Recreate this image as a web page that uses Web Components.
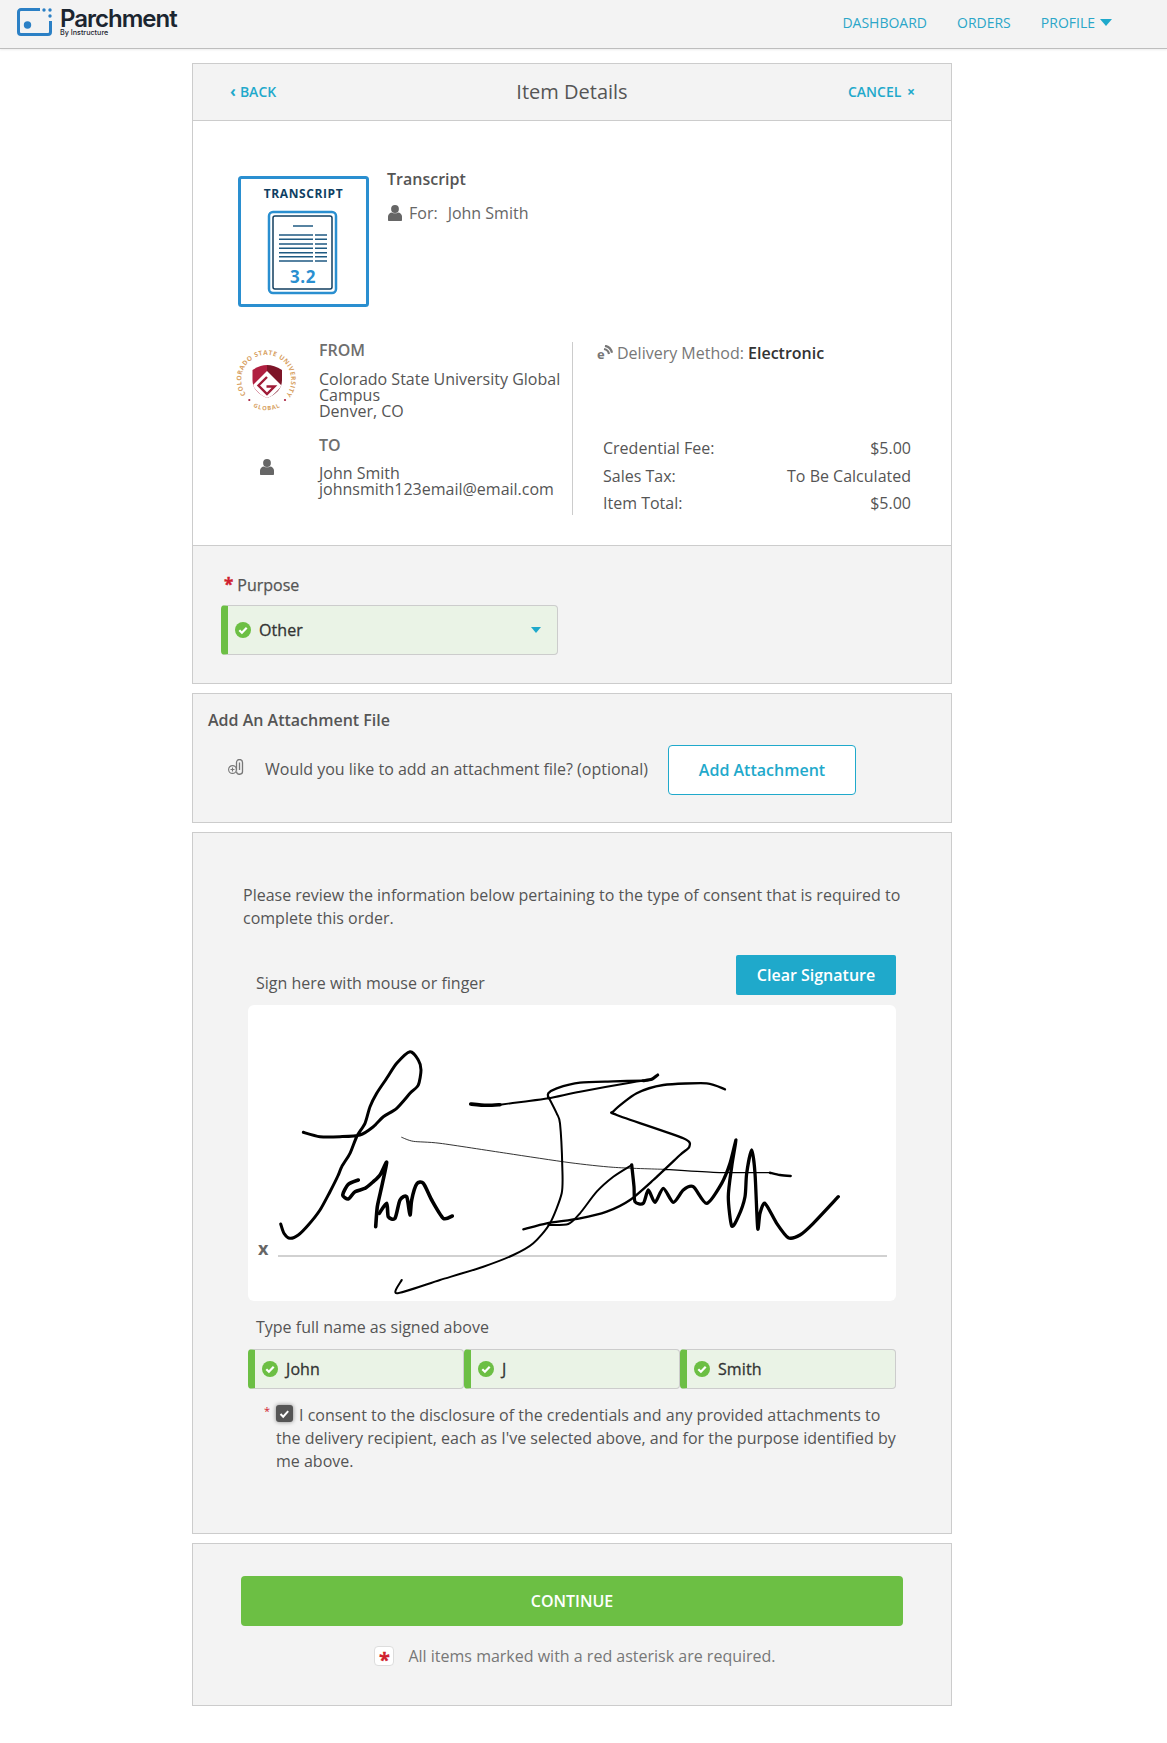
<!DOCTYPE html>
<html lang="en">
<head>
<meta charset="utf-8">
<title>Item Details</title>
<style>
  html, body { margin: 0; background: #fff; }
  body { font: 16px/22px "Open Sans", "Liberation Sans", sans-serif; color: #555; }
  .page { width: 760px; margin-left: 192px; padding: 14px 0 37px; }
</style>
</head>
<body>
<app-header></app-header>
<div class="page">
  <item-panel></item-panel>
  <attachment-panel></attachment-panel>
  <consent-panel></consent-panel>
  <continue-panel></continue-panel>
</div>

<script>
const PERSON = (w, h) => `<svg width="${w}" height="${h}" viewBox="0 0 14 16"><circle cx="7" cy="4" r="3.9" fill="#666"/><path d="M0 15v-3.6C0 9 2 7.6 4 7.4c1.8 1.2 4.2 1.2 6 0 2 .2 4 1.600 4 4V15c0 .6-.4 1-1 1H1c-.6 0-1-.4-1-1z" fill="#666"/></svg>`;
const CHECK = `<svg width="16" height="16" viewBox="0 0 16 16"><circle cx="8" cy="8" r="8" fill="#6cbf44"/><path d="M4.300 8.300l2.600 2.500 4.800-5" fill="none" stroke="#fff" stroke-width="2.200"/></svg>`;

class AppHeader extends HTMLElement {
  constructor() {
    super();
    this.attachShadow({ mode: 'open' });
    this.shadowRoot.innerHTML = `
      <style>
        :host { display: block; }
        .bar { height: 49px; box-sizing: border-box; background: #f3f3f3; border-bottom: 1px solid #bdbdbd; box-shadow: 0 1px 2px rgba(0,0,0,.08); display: flex; align-items: center; padding-left: 17px; }
        .brand { display: flex; align-items: flex-start; gap: 7px; margin-top: -4px; }
        .txt { padding-top: 1px; }
        .name { font: 600 24px/20px Inter, "Open Sans", sans-serif; color: #1b2530; letter-spacing: -1px; }
        .by { font: 500 7.200px/8px Inter, "Open Sans", sans-serif; color: #1b2530; }
        nav { margin-left: auto; margin-top: -3px; display: flex; gap: 30px; padding-right: 55px; font-size: 14px; line-height: 20px; color: #2ba6c8; align-items: center; }
        .tri { display: inline-block; width: 0; height: 0; border: 6.500px solid transparent; border-top: 7px solid #1fa9cb; border-bottom: 0; margin-left: 5px; vertical-align: 2px; }
      </style>
      <div class="bar">
        <div class="brand">
          <svg width="36" height="28" viewBox="0 0 36 28">
            <path d="M23 1.500H4A2.500 2.500 0 0 0 1.500 4v20A2.500 2.500 0 0 0 4 26.500h27a2.500 2.500 0 0 0 2.500-2.500V13" fill="none" stroke="#2b80c5" stroke-width="3"/>
            <circle cx="10.500" cy="17" r="3.700" fill="#2b80c5"/>
            <circle cx="27" cy="2" r="1.700" fill="#2b80c5"/><circle cx="33" cy="2" r="1.700" fill="#2b80c5"/><circle cx="33" cy="8" r="1.700" fill="#2b80c5"/>
          </svg>
          <div class="txt"><div class="name">Parchment</div><div class="by">By Instructure</div></div>
        </div>
        <nav><span>DASHBOARD</span><span>ORDERS</span><span>PROFILE<i class="tri"></i></span></nav>
      </div>`;
  }
}
customElements.define('app-header', AppHeader);

class TranscriptIcon extends HTMLElement {
  constructor() {
    super();
    this.attachShadow({ mode: 'open' });
    const rows = [59, 63.3, 68, 72.3, 76.7, 80.7, 85];
    const lines = rows.map(y => `<path d="M41 ${y}H75M77 ${y}H89"/>`).join('');
    this.shadowRoot.innerHTML = `
      <style>:host { display: block; width: 131px; height: 131px; flex: none; } text { font-family: "Open Sans", sans-serif; font-weight: 700; } svg { display: block; }</style>
      <svg width="131" height="131" viewBox="0 0 131 131">
        <rect x="1.500" y="1.500" width="128" height="128" rx="2" fill="#fff" stroke="#2a8fd0" stroke-width="3"/>
        <text x="65.500" y="21.500" text-anchor="middle" font-size="12" letter-spacing=".6" fill="#0f3f63">TRANSCRIPT</text>
        <rect x="31" y="36" width="67" height="81" rx="4" fill="none" stroke="#2a8fd0" stroke-width="2.500"/>
        <rect x="35" y="40" width="59" height="73" rx="2" fill="none" stroke="#123f60" stroke-width="1.500"/>
        <g stroke="#1f5a82" stroke-width="1.500" fill="none"><path d="M55 50H75"/>${lines}</g>
        <text x="65" y="107" text-anchor="middle" font-size="17" letter-spacing=".5" fill="#2a8fd0">3.2</text>
      </svg>`;
  }
}
customElements.define('transcript-icon', TranscriptIcon);

class SchoolLogo extends HTMLElement {
  constructor() {
    super();
    this.attachShadow({ mode: 'open' });
    this.shadowRoot.innerHTML = `
      <style>:host { display: block; width: 60px; height: 60px; } text { font-family: "Open Sans", sans-serif; font-weight: 700; fill: #d79f62; } svg { display: block; overflow: visible; }</style>
      <svg width="60" height="60" viewBox="0 0 60 60">
        <defs>
          <path id="top" d="M10 44.500A25 25 0 1 1 50.500 44.500"/>
          <path id="bot" d="M13 54A29 29 0 0 0 49 54"/>
          <clipPath id="sh"><path d="M16.500 20Q24 15 31 15Q38 15 46 20V30Q46 42 31 48Q16.500 42 16.500 30Z"/></clipPath>
        </defs>
        <text font-size="6.500"><textPath href="#top" textLength="110" lengthAdjust="spacing">COLORADO STATE UNIVERSITY</textPath></text>
        <text font-size="5.800" letter-spacing=".9"><textPath href="#bot" startOffset="50%" text-anchor="middle">GLOBAL</textPath></text>
        <circle cx="13.300" cy="50" r="1.100" fill="#a81f3d"/><circle cx="49" cy="50" r="1.100" fill="#a81f3d"/>
        <path d="M16.500 20Q24 15 31 15V48Q16.500 42 16.500 30Z" fill="#b01f40"/>
        <path d="M46 20Q38 15 31 15V48Q46 42 46 30Z" fill="#7d1528"/>
        <g clip-path="url(#sh)">
          <path d="M31 21L46 36L31 51L16 36Z" fill="#fff"/>
          <path d="M31 27L22.500 35.500L31 44L38.500 36.500H30.500" fill="none" stroke="#a01c38" stroke-width="2.400"/>
        </g>
      </svg>`;
  }
}
customElements.define('school-logo', SchoolLogo);

class ItemPanel extends HTMLElement {
  constructor() {
    super();
    this.attachShadow({ mode: 'open' });
    this.shadowRoot.innerHTML = `
      <style>
        :host { display: block; border: 1px solid #ccc; margin-bottom: 9px; background: #f3f3f3; }
        .head { height: 56px; border-bottom: 1px solid #ccc; display: grid; grid-template-columns: 1fr auto 1fr; align-items: center; box-sizing: content-box; }
        .link { font-size: 14px; font-weight: 600; color: #1fa9cb; }
        .back { padding-left: 37px; display: flex; align-items: center; gap: 4px; margin-top: -1px; }
        .back b { font-size: 16px; line-height: 16px; font-weight: 700; margin-top: -2px; }
        .cancel { justify-self: end; padding-right: 36px; }
        .cancel b { font-weight: 700; margin-left: 2px; }
        .title { font-size: 20px; color: #555; }
        .body { background: #fff; padding: 55px 0 30px; border-bottom: 1px solid #ccc; }
        .top { display: flex; gap: 19px; padding-left: 45px; }
        .tname { font-weight: 600; margin: -8px 0 0 -1px; }
        .for { display: flex; align-items: center; margin-top: 12px; gap: 7px; color: #666; }
        .for b { font-weight: 400; margin-left: 3px; }
        .cols { display: grid; grid-template-columns: 379px 1fr; margin-top: 35px; }
        .left { padding-bottom: 18px; }
        .row { display: flex; }
        .ic { width: 60px; margin-left: 43px; margin-right: 23px; display: flex; justify-content: center; flex: none; }
        .from-ic { padding-top: 8px; }
        .to-ic { padding: 22px 0 0 2px; box-sizing: border-box; }
        .to { margin-top: 18px; }
        h4 { margin: 0; font-size: 16px; line-height: 16px; font-weight: 600; color: #6e6e6e; }
        .addr { line-height: 16px; margin-top: 13px; }
        .to .addr { margin-top: 12px; }
        .right { border-left: 1px solid #ccc; padding-left: 24px; }
        .deliv { display: flex; align-items: center; gap: 4px; color: #777; }
        .deliv b { font-weight: 600; color: #333; }
        .dicon { position: relative; width: 16px; height: 16px; flex: none; }
        .dicon span { position: absolute; left: 0; top: 3px; font-weight: 700; font-size: 13px; line-height: 13px; }
        .fees { margin: 71px 0 -3px 6px; width: 308px; }
        .fee { display: flex; justify-content: space-between; height: 27.500px; line-height: 27.500px; }
        .purpose { padding: 28px 28px 28px; }
        .label { margin-left: 3px; -webkit-text-stroke: .25px #555; }
        .star { color: #d0202e; font-size: 17px; margin-right: 4px; font-weight: 700; -webkit-text-stroke: .4px #d0202e; }
        .sel { margin-top: 9px; width: 337px; height: 50px; box-sizing: border-box; background: #eaf3e6; border: 1px solid #ccc; border-left: 7px solid #6cbf44; border-radius: 4px; display: flex; align-items: center; gap: 8px; padding-left: 7px; color: #333; -webkit-text-stroke: .3px #333; letter-spacing: .1px; }
        .caret { margin-left: auto; margin-right: 16px; width: 0; height: 0; border: 5px solid transparent; border-top: 6px solid #1fa9cb; border-bottom: 0; }
        svg { flex: none; display: block; }
      </style>
      <div class="head">
        <span class="link back"><b>‹</b><span>BACK</span></span>
        <span class="title">Item Details</span>
        <span class="link cancel">CANCEL <b>×</b></span>
      </div>
      <div class="body">
        <div class="top">
          <transcript-icon></transcript-icon>
          <div>
            <div class="tname">Transcript</div>
            <div class="for">${PERSON(14, 16)}<span>For:</span><b>John Smith</b></div>
          </div>
        </div>
        <div class="cols">
          <div class="left">
            <div class="row">
              <div class="ic from-ic"><school-logo></school-logo></div>
              <div><h4>FROM</h4><div class="addr">Colorado State University Global<br>Campus<br>Denver, CO</div></div>
            </div>
            <div class="row to">
              <div class="ic to-ic">${PERSON(14, 16)}</div>
              <div><h4>TO</h4><div class="addr">John Smith<br>johnsmith123email@email.com</div></div>
            </div>
          </div>
          <div class="right">
            <div class="deliv">
              <div class="dicon"><span>e</span><svg width="16" height="16" viewBox="0 0 16 16"><path d="M7 4a6 6 0 0 1 5 5M8 .8a9 9 0 0 1 7 7" fill="none" stroke="#777" stroke-width="2.200"/></svg></div>
              <span>Delivery Method: <b>Electronic</b></span>
            </div>
            <div class="fees">
              <div class="fee"><span>Credential Fee:</span><span>$5.00</span></div>
              <div class="fee"><span>Sales Tax:</span><span>To Be Calculated</span></div>
              <div class="fee"><span>Item Total:</span><span>$5.00</span></div>
            </div>
          </div>
        </div>
      </div>
      <div class="purpose">
        <div class="label"><span class="star">*</span>Purpose</div>
        <div class="sel">${CHECK}<span>Other</span><i class="caret"></i></div>
      </div>`;
  }
}
customElements.define('item-panel', ItemPanel);

class AttachmentPanel extends HTMLElement {
  constructor() {
    super();
    this.attachShadow({ mode: 'open' });
    this.shadowRoot.innerHTML = `
      <style>
        :host { display: block; border: 1px solid #ccc; background: #f3f3f3; margin-bottom: 9px; padding: 15px 15px 27px; }
        .t { font-weight: 600; }
        .row { display: flex; align-items: center; margin-top: 14px; padding-left: 20px; }
        .row span { margin-top: -2px; }
        svg { flex: none; margin-right: 20px; margin-top: -6px; }
        .btn { margin-left: 20px; width: 188px; height: 50px; box-sizing: border-box; background: #fff; border: 1px solid #1fa9cb; border-radius: 4px; color: #1fa9cb; font-weight: 600; display: flex; align-items: center; justify-content: center; }
      </style>
      <div class="t">Add An Attachment File</div>
      <div class="row">
        <svg width="17" height="16" viewBox="0 0 17 16" fill="none" stroke="#777" stroke-width="1.100"><circle cx="4.500" cy="10.500" r="3.900"/><path d="M4.500 8.500v4M2.500 10.500h4" /><path d="M8.500 11.500V3.500a3 3 0 0 1 6 0V12a3 3 0 0 1-6 .5M11.500 3.500V11" stroke-width="1.300"/></svg>
        <span>Would you like to add an attachment file? (optional)</span>
        <div class="btn">Add Attachment</div>
      </div>`;
  }
}
customElements.define('attachment-panel', AttachmentPanel);

class SignaturePad extends HTMLElement {
  constructor() {
    super();
    this.attachShadow({ mode: 'open' });
    // points read off the reference, a and b are the two crops they were measured in
    const a = p => { const o = []; for (let i = 0; i < p.length; i += 2) o.push([p[i] / 3 + 240, p[i + 1] / 3 + 1000]); return o; };
    const b = p => { const o = []; for (let i = 0; i < p.length; i += 2) o.push([p[i] / 3 + 480, p[i + 1] / 3 + 1040]); return o; };
    const strokes = [
      [3, a([122,672,132,700,150,715,175,705,205,675,240,630,270,575,295,525,305,500,330,460,350,410,375,370,390,320,410,280,440,235,470,190,510,155,535,180,543,210,535,255,510,280,470,325,430,350,400,380,360,405,300,410,240,410,190,397])],
      [3.600, a([355,540,325,553,308,585,325,597,345,575,375,565,400,545,420,525,440,487,425,560,412,620,407,680])],
      [3.600, a([418,640,440,610,445,650,465,655,480,600,500,590,510,645,515,600,530,552,550,550,575,600,610,655,637,648])],
      [3.600, a([692,312,740,316,780,314])],
      [1.900, a([780,314,850,305,925,295]).concat(b([300,155,450,128,490,122]))],
      [2.300, b([205,175,205,160,230,145,300,128,400,124,490,122])],
      [3.100, b([490,122,515,118,533,105])],
      [2, a([925,290,950,340,960,370,967,500,965,580,930,670,880,730,820,765,730,800,600,840,470,880,485,840])],
      [.8, a([485,412,520,424,600,430,800,460,990,488]).concat(b([400,382,550,388]))],
      [1.300, b([550,388,700,397,870,398])],
      [2.500, b([870,398,900,405,932,408])],
      [2.300, b([130,568,200,550,300,535,380,515,450,480,520,420,600,345,628,320,610,295,410,225,402,212,470,160,550,135,680,130,735,148])],
      [2, b([205,555,265,552,300,520,350,455,400,410,455,375])],
      [3.300, b([455,375,462,440,465,485,490,490,505,450,525,487,550,445,580,487,610,450,640,440,680,490,725,430,750,370,768,300,755,380,745,470,755,558,775,530,795,470,800,400,815,330,825,400,833,565,840,520,855,490,890,550,925,593,960,585,1000,550,1075,470])]
    ];
    const toPath = pts => {
      let d = `M${pts[0][0].toFixed(1)} ${pts[0][1].toFixed(1)}`;
      for (let i = 0; i < pts.length - 1; i++) {
        const p0 = pts[i - 1] || pts[i], p1 = pts[i], p2 = pts[i + 1], p3 = pts[i + 2] || p2;
        const c1 = [p1[0] + (p2[0] - p0[0]) / 8, p1[1] + (p2[1] - p0[1]) / 8];
        const c2 = [p2[0] - (p3[0] - p1[0]) / 8, p2[1] - (p3[1] - p1[1]) / 8];
        d += `C${c1[0].toFixed(1)} ${c1[1].toFixed(1)} ${c2[0].toFixed(1)} ${c2[1].toFixed(1)} ${p2[0].toFixed(1)} ${p2[1].toFixed(1)}`;
      }
      return d;
    };
    const ink = strokes.map(s => `<path d="${toPath(s[1])}" stroke-width="${s[0]}"/>`).join('');
    this.shadowRoot.innerHTML = `
      <style>
        :host { display: block; height: 296px; background: #fff; border-radius: 6px; }
        svg { display: block; }
        text { font-family: "Open Sans", sans-serif; font-weight: 700; font-size: 18px; fill: #666; }
      </style>
      <svg width="648" height="296" viewBox="248 1005 648 296">
        <text x="258" y="1255">x</text>
        <path d="M278 1256H887" stroke="#a3a3a3" stroke-width="1.200" fill="none"/>
        <g fill="none" stroke="#000" stroke-linecap="round" stroke-linejoin="round">${ink}</g>
      </svg>`;
  }
}
customElements.define('signature-pad', SignaturePad);

class NameField extends HTMLElement {
  constructor() {
    super();
    this.attachShadow({ mode: 'open' });
    this.shadowRoot.innerHTML = `
      <style>
        :host { display: flex; align-items: center; gap: 8px; flex: 1; height: 40px; box-sizing: border-box; background: #eaf3e6; border: 1px solid #ccc; border-left: 7px solid #6cbf44; border-radius: 4px; padding-left: 7px; color: #333; -webkit-text-stroke: .3px #333; letter-spacing: .1px; }
        svg { display: block; flex: none; }
      </style>${CHECK}<slot></slot>`;
  }
}
customElements.define('name-field', NameField);

class ConsentPanel extends HTMLElement {
  constructor() {
    super();
    this.attachShadow({ mode: 'open' });
    this.shadowRoot.innerHTML = `
      <style>
        :host { display: block; border: 1px solid #ccc; background: #f3f3f3; margin-bottom: 9px; padding: 51px 0 60px 50px; line-height: 23px; }
        p { margin: 0; width: 660px; }
        .wrap { margin: 25px 0 0 5px; width: 648px; }
        .sign { display: flex; justify-content: space-between; align-items: flex-end; margin-bottom: 10px; }
        .sign span { margin: 0 0 1px 8px; line-height: 22px; }
        .clear { width: 160px; height: 40px; background: #1fa9cb; color: #fff; font-weight: 600; border-radius: 2px; display: flex; align-items: center; justify-content: center; }
        .type { margin: 15px 0 11px 8px; line-height: 22px; }
        .names { display: flex; }
        .agree { margin-top: 15px; display: flex; }
        .st { width: 28px; flex: none; text-align: right; padding-right: 6px; box-sizing: border-box; color: #d0202e; font-size: 11px; line-height: 14px; }
        .txt { width: 622px; line-height: 23px; }
        .box { float: left; width: 17px; height: 17px; margin: 1px 6px 0 0; background: #555; border-radius: 3px; box-shadow: 0 0 4px rgba(0,0,0,.45); display: flex; align-items: center; justify-content: center; }
      </style>
      <p>Please review the information below pertaining to the type of consent that is required to complete this order.</p>
      <div class="wrap">
        <div class="sign"><span>Sign here with mouse or finger</span><div class="clear">Clear Signature</div></div>
        <signature-pad></signature-pad>
        <div class="type">Type full name as signed above</div>
        <div class="names"><name-field>John</name-field><name-field>J</name-field><name-field>Smith</name-field></div>
        <div class="agree">
          <span class="st">*</span>
          <div class="txt"><span class="box"><svg width="11" height="10" viewBox="0 0 11 10"><path d="M1.500 5l2.700 2.700 5-5.500" fill="none" stroke="#fff" stroke-width="2"/></svg></span>I consent to the disclosure of the credentials and any provided attachments to the delivery recipient, each as I've selected above, and for the purpose identified by me above.</div>
        </div>
      </div>`;
  }
}
customElements.define('consent-panel', ConsentPanel);

class ContinuePanel extends HTMLElement {
  constructor() {
    super();
    this.attachShadow({ mode: 'open' });
    this.shadowRoot.innerHTML = `
      <style>
        :host { display: block; border: 1px solid #ccc; background: #f3f3f3; padding: 32px 48px 39px; }
        .go { height: 50px; background: #6cbf44; color: #fff; font-weight: 600; border-radius: 4px; display: flex; align-items: center; justify-content: center; }
        .note { margin-top: 20px; padding-left: 6px; line-height: 20px; display: flex; justify-content: center; align-items: center; gap: 14px; color: #777; }
        .s { width: 20px; height: 20px; box-sizing: border-box; background: #fff; border: 1px solid #ddd; border-radius: 4px; color: #d0202e; font-weight: 700; font-size: 20px; line-height: 25px; text-align: center; -webkit-text-stroke: .3px #d0202e; }
      </style>
      <div class="go">CONTINUE</div>
      <div class="note"><span class="s">*</span><span>All items marked with a red asterisk are required.</span></div>`;
  }
}
customElements.define('continue-panel', ContinuePanel);
</script>
</body>
</html>
